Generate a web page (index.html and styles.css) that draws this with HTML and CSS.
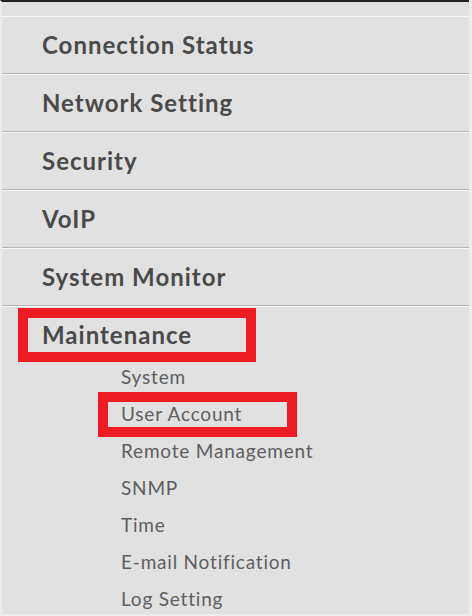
FILE: index.html
```html
<!DOCTYPE html>
<html lang="en">
<head>
    <meta charset="UTF-8">
    <meta name="viewport" content="width=device-width, initial-scale=1.0">
    <title>Menu</title>
    <link rel="stylesheet" href="styles.css">
</head>
<body>
    <div class="frame">
        <ul class="menu">
            <li class="menu-item">Connection Status</li>
            <li class="menu-item">Network Setting</li>
            <li class="menu-item">Security</li>
            <li class="menu-item">VoIP</li>
            <li class="menu-item">System Monitor</li>
            <li class="menu-item open marked">Maintenance</li>
        </ul>
        <!-- sub menu of Maintenance -->
        <ul class="submenu">
            <li class="sub-item">System</li>
            <li class="sub-item marked">User Account</li>
            <li class="sub-item">Remote Management</li>
            <li class="sub-item">SNMP</li>
            <li class="sub-item">Time</li>
            <li class="sub-item">E-mail Notification</li>
            <li class="sub-item">Log Setting</li>
        </ul>
    </div>
</body>
</html>
```

FILE: styles.css
```css
html, body {
    margin: 0;
    padding: 0;
}

body {
    background-color: #ececec;
    font-family: Lato, "Open Sans", sans-serif;
    height: 616px;
    overflow: hidden;
}

.frame {
    border-top: 2px solid #222;
    border-left: 2px solid #ebebeb;
    margin-right: 3px;
    background-color: #e1e1e1;
    height: 614px;
    padding-top: 14px;
    box-sizing: border-box;
    overflow: hidden;
}

ul {
    list-style: none;
    margin: 0;
    padding: 0;
}

/* main items */
.menu-item {
    position: relative;
    padding: 8px 0 8px 40px;
    line-height: 40px;
    font-size: 24px;
    font-weight: 700;
    letter-spacing: 1px;
    color: #4a4a4a;
    border-top: 1px solid #f6f6f6;
    border-bottom: 1px solid #b6b6b6;
}

.menu-item.open {
    padding-bottom: 2px;
    border-bottom: none;
}

/* sub items */
.submenu {
    padding-top: 1px;
}

.sub-item {
    position: relative;
    padding-left: 119px;
    line-height: 37px;
    font-size: 19px;
    letter-spacing: 0.8px;
    color: #5e5e5e;
}

/* red annotation boxes */
.marked::after {
    content: "";
    position: absolute;
    border: 10px solid #ed1c24;
    box-sizing: border-box;
    z-index: 1;
}

.menu-item.marked::after {
    top: 1px;
    left: 16px;
    width: 238px;
    height: 54px;
}

.sub-item.marked::after {
    top: -3px;
    left: 96px;
    width: 199px;
    height: 45px;
}
```
